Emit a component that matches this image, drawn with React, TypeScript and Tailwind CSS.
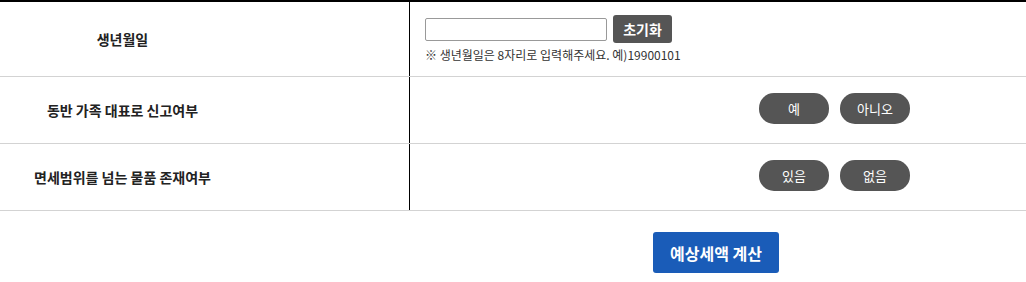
import { useState } from 'react';

const font = { fontFamily: '"Noto Sans CJK KR", "Noto Sans", sans-serif' };

const Pill = ({ label, onClick }: { label: string; onClick?: () => void }) => (
  <button
    type="button"
    onClick={onClick}
    className="w-[70px] h-[31px] rounded-[15px] bg-[#555555] text-white text-[13px] leading-none"
  >
    {label}
  </button>
);

const Label = ({ children }: { children: string }) => (
  <div className="w-[410px] shrink-0 border-r border-black flex items-center">
    <div className="w-[245px] text-center text-[14px] font-bold text-[#222222]">{children}</div>
  </div>
);

export default function App() {
  const [birth, setBirth] = useState('');
  const [family, setFamily] = useState<boolean | null>(null);
  const [over, setOver] = useState<boolean | null>(null);

  return (
    <div className="w-[1026px] h-[282px] bg-white" style={font}>
      <div className="border-t-2 border-black">
        <div className="flex h-[75px] border-b border-[#d3d3d3]">
          <Label>생년월일</Label>
          <div className="flex-1 pl-[15px] pt-[13px]">
            <div className="flex items-center gap-[6px]">
              <input
                value={birth}
                onChange={(e) => setBirth(e.target.value)}
                className="w-[182px] h-[23px] border border-[#999999] rounded-[2px] px-1 text-[13px] outline-none"
              />
              <button
                type="button"
                onClick={() => setBirth('')}
                className="w-[59px] h-[28px] rounded-[3px] bg-[#555555] text-white text-[14px] font-bold leading-none"
              >
                초기화
              </button>
            </div>
            <p className="mt-[5px] text-[12px] leading-[14px] text-[#333333]">
              ※ 생년월일은 8자리로 입력해주세요. 예)19900101
            </p>
          </div>
        </div>

        <div className="flex h-[67px] border-b border-[#d3d3d3]">
          <Label>동반 가족 대표로 신고여부</Label>
          <div className="flex-1 flex items-center gap-[11px] pl-[349px] pb-[4px]">
            <Pill label="예" onClick={() => setFamily(true)} />
            <Pill label="아니오" onClick={() => setFamily(false)} />
          </div>
        </div>

        <div className="flex h-[67px] border-b border-[#d3d3d3]">
          <Label>면세범위를 넘는 물품 존재여부</Label>
          <div className="flex-1 flex items-center gap-[11px] pl-[349px] pb-[4px]">
            <Pill label="있음" onClick={() => setOver(true)} />
            <Pill label="없음" onClick={() => setOver(false)} />
          </div>
        </div>
      </div>

      <div className="flex pt-[21px] pl-[653px]" data-family={String(family)} data-over={String(over)}>
        <button
          type="button"
          className="w-[126px] h-[41px] rounded-[3px] bg-[#1a5cb8] text-white text-[16px] font-bold"
        >
          예상세액 계산
        </button>
      </div>
    </div>
  );
}
